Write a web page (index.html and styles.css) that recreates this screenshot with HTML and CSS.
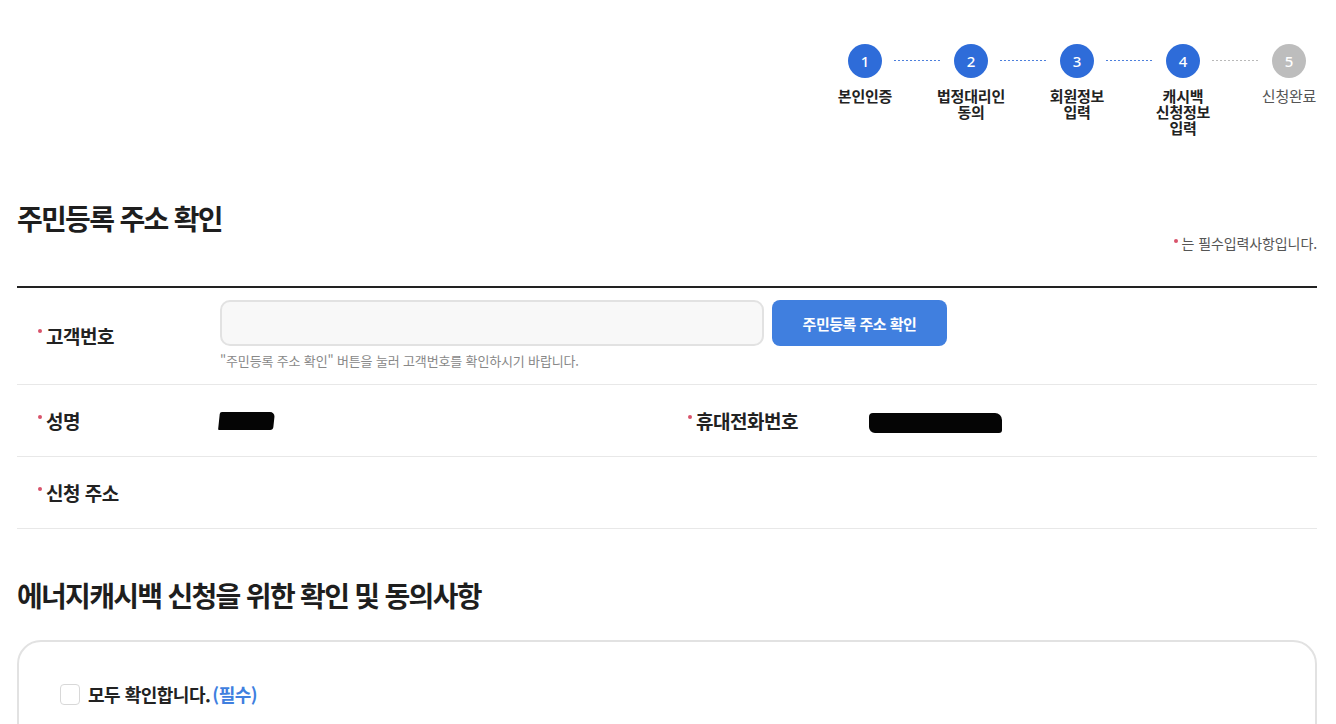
FILE: index.html
```html
<!DOCTYPE html>
<html lang="ko">
<head>
<meta charset="utf-8">
<title>주민등록 주소 확인</title>
<link rel="stylesheet" href="styles.css">
</head>
<body>
<div class="page">
  <ol class="steps">
    <li class="step done"><span class="circle">1</span><span class="step-label">본인인증</span></li>
    <li class="step done"><span class="circle">2</span><span class="step-label">법정대리인 동의</span></li>
    <li class="step done"><span class="circle">3</span><span class="step-label">회원정보 입력</span></li>
    <li class="step done"><span class="circle">4</span><span class="step-label">캐시백 신청정보 입력</span></li>
    <li class="step todo"><span class="circle">5</span><span class="step-label">신청완료</span></li>
  </ol>

  <div class="section-head">
    <h2 class="title">주민등록 주소 확인</h2>
    <p class="req-note"><span class="req-dot"></span>는 필수입력사항입니다.</p>
  </div>

  <div class="form-table">
    <div class="row row-id">
      <div class="label"><span class="req-dot"></span>고객번호</div>
      <div class="field">
        <div class="field-line">
          <input class="text-input" type="text" aria-label="고객번호">
          <button class="btn-primary" type="button">주민등록 주소 확인</button>
        </div>
        <p class="hint">"주민등록 주소 확인" 버튼을 눌러 고객번호를 확인하시기 바랍니다.</p>
      </div>
    </div>
    <div class="row row-two">
      <div class="label"><span class="req-dot"></span>성명</div>
      <div class="value"><span class="redact redact-name"></span></div>
      <div class="label"><span class="req-dot"></span>휴대전화번호</div>
      <div class="value"><span class="redact redact-phone"></span></div>
    </div>
    <div class="row row-one">
      <div class="label"><span class="req-dot"></span>신청 주소</div>
      <div class="value"></div>
    </div>
  </div>

  <h2 class="title title-agree">에너지캐시백 신청을 위한 확인 및 동의사항</h2>

  <div class="agree-box">
    <label class="check-all">
      <span class="checkbox"></span>
      <span class="check-text">모두 확인합니다.<em class="required">(필수)</em></span>
    </label>
  </div>
</div>
</body>
</html>
```

FILE: styles.css
```css
* { box-sizing: border-box; }

html, body {
  margin: 0;
  padding: 0;
  background: #ffffff;
}

body {
  font-family: "Noto Sans CJK KR", "Noto Sans", sans-serif;
  color: #222222;
  word-break: keep-all;
}

.page {
  padding: 0 19px 0 17px;
}

/* ---------- steps ---------- */
.steps {
  list-style: none;
  margin: 0 -7px 0 0;
  padding: 44px 0 0 0;
  display: flex;
  justify-content: flex-end;
  gap: 36px;
}

.step {
  position: relative;
  width: 70px;
  display: flex;
  flex-direction: column;
  align-items: center;
}

.step + .step::before {
  content: "";
  position: absolute;
  top: 16px;
  left: -42px;
  width: 47px;
  height: 1px;
  background: repeating-linear-gradient(90deg, #4d7fdc 0 2px, transparent 2px 4px);
}

.step.todo::before {
  background: repeating-linear-gradient(90deg, #b9b9b9 0 2px, transparent 2px 4px);
}

.circle {
  width: 34px;
  height: 34px;
  border-radius: 50%;
  background: #2e6cd9;
  color: #ffffff;
  font-family: "Noto Sans", sans-serif;
  font-size: 15px;
  font-weight: 500;
  display: flex;
  align-items: center;
  justify-content: center;
}

.step.todo .circle {
  background: #bdbdbd;
}

.step-label {
  margin-top: 10px;
  font-size: 15px;
  font-weight: 700;
  line-height: 16px;
  letter-spacing: -0.2px;
  text-align: center;
  color: #222222;
  word-break: keep-all;
}

.step.todo .step-label {
  font-weight: 400;
  color: #555555;
}

/* ---------- section head ---------- */
.section-head {
  margin-top: 62px;
  display: flex;
  justify-content: space-between;
  align-items: flex-start;
}

.title {
  margin: 0;
  font-size: 28px;
  line-height: 40px;
  font-weight: 700;
  letter-spacing: -1.7px;
  color: #1e1e1e;
}

.req-note {
  margin: 35px 0 0 0;
  font-size: 14px;
  line-height: 20px;
  letter-spacing: -0.1px;
  color: #555555;
  display: flex;
  align-items: center;
}

.req-dot {
  display: inline-block;
  width: 4px;
  height: 4px;
  border-radius: 50%;
  background: #d9536b;
  margin-right: 4px;
  position: relative;
  top: -4px;
  flex: none;
}

.req-note .req-dot {
  top: -2px;
}

/* ---------- form table ---------- */
.form-table {
  margin-top: 33px;
  border-top: 2px solid #222222;
}

.row {
  display: grid;
  align-items: center;
  border-bottom: 1px solid #e8e8e8;
}

.row-id {
  grid-template-columns: 203px 1fr;
  padding: 12px 0 14px 0;
}

.row-two {
  grid-template-columns: 203px 1fr 203px 1fr;
  min-height: 72px;
}

.row-one {
  grid-template-columns: 203px 1fr;
  min-height: 72px;
}

.label {
  padding-left: 21px;
  font-size: 19px;
  font-weight: 700;
  letter-spacing: -0.5px;
  color: #222222;
  display: flex;
  align-items: center;
}

.field-line {
  display: flex;
  gap: 8px;
}

.text-input {
  width: 544px;
  height: 46px;
  border: 2px solid #e2e2e2;
  border-radius: 10px;
  background: #f8f8f8;
  padding: 0 14px;
  font-family: inherit;
  font-size: 15px;
  outline: none;
}

.btn-primary {
  width: 175px;
  height: 46px;
  border: none;
  border-radius: 8px;
  background: #407fdf;
  color: #ffffff;
  font-family: inherit;
  font-size: 15px;
  font-weight: 700;
  letter-spacing: -0.5px;
  cursor: pointer;
}

.hint {
  margin: 6px 0 0 0;
  font-size: 13px;
  line-height: 18px;
  letter-spacing: -0.15px;
  color: #888888;
}

.value {
  display: flex;
  align-items: center;
}

.redact {
  display: inline-block;
  background: #050505;
}

.redact-name {
  width: 55px;
  height: 18px;
  margin-left: -1px;
  border-radius: 2px 5px 3px 1px;
  transform: skewX(-6deg);
}

.redact-phone {
  width: 133px;
  height: 20px;
  margin-left: -1px;
  margin-top: 4px;
  border-radius: 4px 7px 3px 6px;
}

/* ---------- agree ---------- */
.title-agree {
  margin-top: 46px;
}

.agree-box {
  margin-top: 25px;
  border: 2px solid #e2e2e2;
  border-radius: 24px 24px 0 0;
  padding: 41px 41px 24px 41px;
}

.check-all {
  display: flex;
  align-items: center;
  gap: 8px;
  cursor: pointer;
}

.checkbox {
  width: 20px;
  height: 21px;
  border: 1px solid #d8d8d8;
  border-radius: 4px;
  background: #ffffff;
  flex: none;
}

.check-text {
  font-size: 18px;
  font-weight: 700;
  letter-spacing: -0.5px;
  color: #222222;
  line-height: 22px;
}

.required {
  font-style: normal;
  color: #407fdf;
  margin-left: 2px;
}
```
